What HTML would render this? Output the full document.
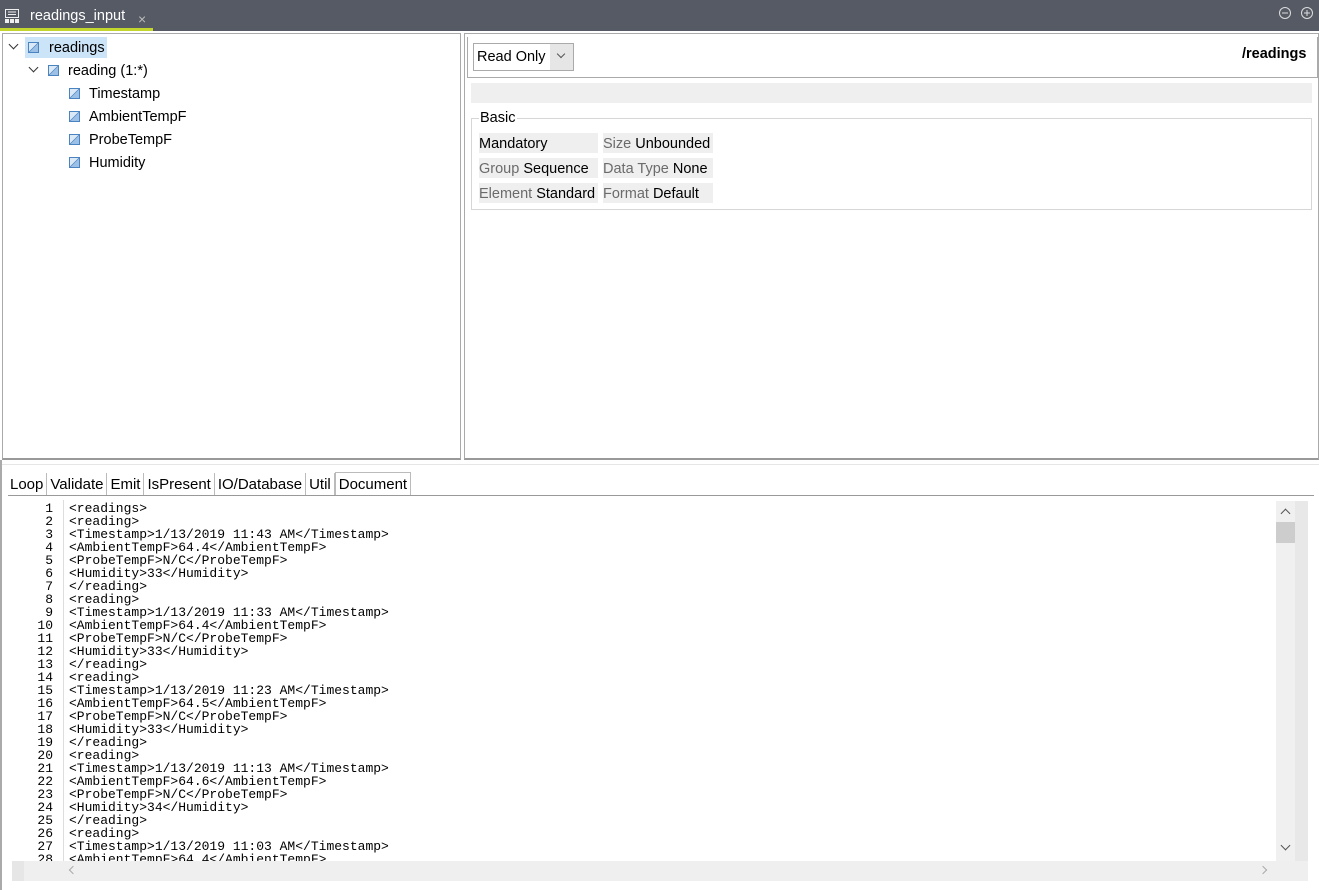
<!DOCTYPE html>
<html><head><meta charset="utf-8"><style>
*{margin:0;padding:0;box-sizing:border-box}
body{width:1319px;height:890px;background:#fff;position:relative;overflow:hidden;font-family:"Segoe UI","Liberation Sans",sans-serif;font-size:14px;color:#000}
.abs{position:absolute}
.topbar{left:0;top:0;width:1319px;height:31px;background:#565a64}
.tab{left:0;top:0;width:153px;height:31px;background:#565a64;border-bottom:3px solid #c2d62d}
.tree div{position:absolute;height:21px;line-height:22px;font-size:14.5px;white-space:nowrap}
.ico{display:inline-block;width:11px;height:11px;border:1px solid #4b83c0;background:linear-gradient(135deg,#dbe9f7 45%,#4b83c0 50%,#9dc0e6 55%);vertical-align:-1px;margin-right:9px}
.chev{display:inline-block;width:7px;height:7px;border-right:1.5px solid #333;border-bottom:1.5px solid #333;transform:rotate(45deg);margin-right:11px;vertical-align:4px}
.cell{position:absolute;background:#efefef;height:20px;line-height:22px;font-size:14.5px;white-space:nowrap}
.g{color:#6b6b6b}
.btabs span{display:inline-block;border-right:1px solid #bbb;padding:0 3px;height:22px;line-height:24px;font-size:15px}
pre{font-family:"Liberation Mono",monospace;font-size:13px;line-height:13px}
</style></head><body>
<div class="abs topbar"></div>
<div class="abs tab"></div>
<svg class="abs" style="left:5px;top:9px" width="15" height="15" viewBox="0 0 15 15"><rect x="0.5" y="0.5" width="13" height="8" fill="none" stroke="#eee"/><path d="M3 3h8M3 5.5h8" stroke="#eee"/><rect x="0" y="10" width="4" height="4" fill="#eee"/><rect x="5" y="10" width="4" height="4" fill="#eee"/><rect x="10" y="10" width="4" height="4" fill="#eee"/></svg>
<div class="abs" style="left:30px;top:8px;color:#fff;font-size:14.5px">readings_input</div>
<div class="abs" style="left:138px;top:11px;color:#bbb;font-size:14px">×</div>
<svg class="abs" style="left:1278px;top:6px" width="36" height="14"><circle cx="7" cy="7" r="5.5" fill="none" stroke="#ddd"/><path d="M4 7h6" stroke="#ddd"/><circle cx="29" cy="7" r="5.5" fill="none" stroke="#ddd"/><path d="M26 7h6M29 4v6" stroke="#ddd"/></svg>

<div class="abs" style="left:2px;top:33px;width:459px;height:427px;border:1px solid #aaa;border-bottom:2px solid #999"></div>
<div class="abs" style="left:464px;top:33px;width:855px;height:427px;border:1px solid #aaa;border-bottom:2px solid #999"></div>
<div class="abs" style="left:0;top:464px;width:1319px;height:1px;background:#e6e6e6"></div>

<div class="tree">
<div style="left:25px;top:37px;width:82px;background:#cce4f7"></div>
<div style="left:10px;top:37px"><span class="chev"></span><span class="ico" style="margin-right:10px"></span>readings</div>
<div style="left:30px;top:60px"><span class="chev"></span><span class="ico"></span>reading (1:*)</div>
<div style="left:69px;top:83px"><span class="ico"></span>Timestamp</div>
<div style="left:69px;top:106px"><span class="ico"></span>AmbientTempF</div>
<div style="left:69px;top:129px"><span class="ico"></span>ProbeTempF</div>
<div style="left:69px;top:152px"><span class="ico"></span>Humidity</div>
</div>

<div class="abs" style="left:467px;top:37px;width:851px;height:41px;border:1px solid #aaa;border-width:0 1px 1px 1px"></div>
<div class="abs" style="left:473px;top:43px;width:101px;height:28px;border:1px solid #aaa;background:#fff"></div>
<div class="abs" style="left:550px;top:44px;width:23px;height:26px;background:#e6e6e6"></div>
<div class="abs" style="left:477px;top:49px;font-size:14.5px">Read Only</div>
<div class="abs" style="left:558px;top:51px;width:6px;height:6px;border-right:1px solid #555;border-bottom:1px solid #555;transform:rotate(45deg)"></div>
<div class="abs" style="left:1242px;top:46px;font-weight:bold;font-size:14.5px">/readings</div>
<div class="abs" style="left:471px;top:83px;width:841px;height:20px;background:#efefef"></div>
<div class="abs" style="left:471px;top:118px;width:841px;height:92px;border:1px solid #d6d6d6"></div>
<div class="abs" style="left:479px;top:110px;background:#fff;padding:0 2px 0 1px;font-size:14.5px">Basic</div>
<div class="cell" style="left:479px;top:133px;width:119px">Mandatory</div>
<div class="cell" style="left:479px;top:158px;width:119px"><span class="g">Group</span> Sequence</div>
<div class="cell" style="left:479px;top:183px;width:119px"><span class="g">Element</span> Standard</div>
<div class="cell" style="left:603px;top:133px;width:110px"><span class="g">Size</span> Unbounded</div>
<div class="cell" style="left:603px;top:158px;width:110px"><span class="g">Data Type</span> None</div>
<div class="cell" style="left:603px;top:183px;width:110px"><span class="g">Format</span> Default</div>

<div class="abs" style="left:0;top:460px;width:2px;height:430px;background:#aaa"></div>
<div class="abs btabs" style="left:7px;top:473px;white-space:nowrap"><span>Loop</span><span>Validate</span><span>Emit</span><span>IsPresent</span><span>IO/Database</span><span>Util</span><span style="border:1px solid #bbb;border-bottom:none;background:#fff;height:23px;margin-top:-1px">Document</span></div>
<div class="abs" style="left:8px;top:495px;width:1306px;height:1px;background:#999"></div>

<pre class="abs" style="left:10px;top:502px;width:43px;text-align:right">1
2
3
4
5
6
7
8
9
10
11
12
13
14
15
16
17
18
19
20
21
22
23
24
25
26
27
28</pre>
<div class="abs" style="left:63px;top:500px;width:1px;height:361px;background:#ddd"></div>
<pre class="abs" style="left:69px;top:502px;height:359px;overflow:hidden">&lt;readings&gt;
&lt;reading&gt;
&lt;Timestamp&gt;1/13/2019 11:43 AM&lt;/Timestamp&gt;
&lt;AmbientTempF&gt;64.4&lt;/AmbientTempF&gt;
&lt;ProbeTempF&gt;N/C&lt;/ProbeTempF&gt;
&lt;Humidity&gt;33&lt;/Humidity&gt;
&lt;/reading&gt;
&lt;reading&gt;
&lt;Timestamp&gt;1/13/2019 11:33 AM&lt;/Timestamp&gt;
&lt;AmbientTempF&gt;64.4&lt;/AmbientTempF&gt;
&lt;ProbeTempF&gt;N/C&lt;/ProbeTempF&gt;
&lt;Humidity&gt;33&lt;/Humidity&gt;
&lt;/reading&gt;
&lt;reading&gt;
&lt;Timestamp&gt;1/13/2019 11:23 AM&lt;/Timestamp&gt;
&lt;AmbientTempF&gt;64.5&lt;/AmbientTempF&gt;
&lt;ProbeTempF&gt;N/C&lt;/ProbeTempF&gt;
&lt;Humidity&gt;33&lt;/Humidity&gt;
&lt;/reading&gt;
&lt;reading&gt;
&lt;Timestamp&gt;1/13/2019 11:13 AM&lt;/Timestamp&gt;
&lt;AmbientTempF&gt;64.6&lt;/AmbientTempF&gt;
&lt;ProbeTempF&gt;N/C&lt;/ProbeTempF&gt;
&lt;Humidity&gt;34&lt;/Humidity&gt;
&lt;/reading&gt;
&lt;reading&gt;
&lt;Timestamp&gt;1/13/2019 11:03 AM&lt;/Timestamp&gt;
&lt;AmbientTempF&gt;64.4&lt;/AmbientTempF&gt;</pre>
<div class="abs" style="left:1276px;top:501px;width:19px;height:360px;background:#f0f0f0"></div>
<div class="abs" style="left:1295px;top:501px;width:13px;height:360px;background:#e8e8e8"></div>
<div class="abs" style="left:1276px;top:522px;width:19px;height:21px;background:#cdcdcd"></div>
<div class="abs" style="left:1282px;top:510px;width:7px;height:7px;border-left:1.5px solid #555;border-top:1.5px solid #555;transform:rotate(45deg)"></div>
<div class="abs" style="left:1282px;top:842px;width:7px;height:7px;border-right:1.5px solid #555;border-bottom:1.5px solid #555;transform:rotate(45deg)"></div>
<div class="abs" style="left:12px;top:861px;width:1296px;height:20px;background:#efefef"></div>
<div class="abs" style="left:12px;top:861px;width:12px;height:20px;background:#e6e6e6"></div>
<div class="abs" style="left:70px;top:867px;width:6px;height:6px;border-left:1px solid #aaa;border-bottom:1px solid #aaa;transform:rotate(45deg)"></div>
<div class="abs" style="left:1260px;top:867px;width:6px;height:6px;border-right:1px solid #aaa;border-top:1px solid #aaa;transform:rotate(45deg)"></div>
</body></html>
